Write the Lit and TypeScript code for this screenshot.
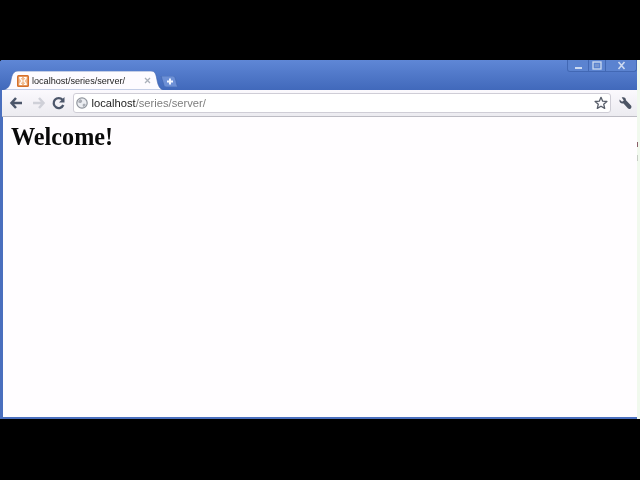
import { LitElement, html, css } from "lit";
import { customElement } from "lit/decorators.js";

@customElement("app-root")
export class AppRoot extends LitElement {
  static styles = css`
    :host { display: block; width: 640px; height: 480px; background: #000; overflow: hidden; font-family: "Liberation Sans", Arial, sans-serif; }
    .stage { height: 480px; padding: 60px 0 61px; box-sizing: border-box; display: flex; filter: blur(0.35px); }
    .window { width: 637px; flex: none; display: flex; flex-direction: column; background: #4a6fbe; border-radius: 3px 3px 0 0; box-shadow: inset 0 1px 0 #6f93dc; }
    .edge { width: 3px; flex: none; background: #f1f9ee; display: flex; flex-direction: column; }
    .mark { width: 1px; flex: none; }
    .m1 { margin-top: 82px; height: 5px; background: #8a5f68; }
    .m2 { margin-top: 8px; height: 6px; background: #c6cdc4; }
    .titlebar { height: 30px; flex: none; display: flex; background: linear-gradient(#5f87d6, #4169bb); padding-left: 3px; border-radius: 3px 3px 0 0; }
    .tab { position: relative; margin-top: 11px; width: 160px; height: 19px; flex: none; display: flex; align-items: center; padding: 0 12px 0 14px; box-sizing: border-box; }
    .tabshape { position: absolute; left: 0; top: 0; width: 160px; height: 19px; }
    .favicon, .tabtitle, .close { position: relative; }
    .favicon { width: 12px; height: 12px; flex: none; }
    .tabtitle { margin-left: 3px; font-size: 9.1px; color: #222; white-space: nowrap; flex: 1; }
    .close { width: 7px; height: 7px; }
    .newtab { margin: 16px 0 0 -3px; width: 18px; height: 11px; flex: none; }
    .controls { margin-left: auto; display: flex; height: 12px; flex: none; border: 1px solid #4268b4; border-top: 0; border-radius: 0 0 3px 3px; background: #5b83d0; box-sizing: border-box; }
    .ctl { display: flex; align-items: center; justify-content: center; border-right: 1px solid #4268b4; }
    .ctl:last-child { border-right: 0; }
    .c1 { width: 21px; box-sizing: border-box; } .c2 { width: 17px; box-sizing: border-box; } .c3 { width: 30px; }
    .main { flex: 1; display: flex; flex-direction: column; padding: 0 0 2px 3px; min-height: 0; }
    .toolbar { height: 26px; flex: none; margin-left: -1px; padding-left: 7px; display: flex; align-items: center; background: linear-gradient(#fbf9fd, #ecebf0); border-bottom: 1px solid #bdbcc4; }
    .nav { width: 16px; height: 14px; flex: none; }
    .n2 { margin-left: 4.5px; }
    .n3 { margin-left: 5.5px; }
    .omnibox { margin-left: 5.5px; width: 538px; height: 20px; flex: none; box-sizing: border-box; background: #fff; border: 1px solid #cfcdd6; border-radius: 3px; display: flex; align-items: center; padding: 0 2px 0 2.5px; }
    .globe { width: 12px; height: 12px; flex: none; }
    .url { margin-left: 3.5px; font-size: 11.2px; color: #222; flex: 1; white-space: nowrap; }
    .url span { color: #7d7d7d; }
    .star { width: 14px; height: 14px; flex: none; }
    .wrench { margin-left: 7.5px; width: 14px; height: 14px; flex: none; }
    .content { flex: 1; background: #fffdff; }
    h1 { margin: 0; padding: 6px 0 0 8px; font: bold 24.2px/1.15 "Liberation Serif", "Times New Roman", serif; color: #0a0a0a; }
  `;

  render() {
    return html`
      <div class="stage">
        <div class="window">
          <div class="titlebar">
            <div class="tab">
              <svg class="tabshape" viewBox="0 0 160 19">
                <path d="M0 19 C5 18 7 15 8 9 C9 3 11 0 15 0 H148 C152 0 153 3 154 9 C155 15 157 18 160 19 Z" fill="#fdfbff" stroke="#3d62ad" stroke-width=".6"/>
              </svg>
              <svg class="favicon" viewBox="0 0 12 12">
                <rect width="12" height="12" rx="1.5" fill="#d6702a"/>
                <rect x="1.5" y="1.5" width="9" height="9" fill="#f2bd92"/>
                <path d="M2.5 2.5 L5 6 L2.5 9.5 M9.5 2.5 L7 6 L9.5 9.5 M2.5 2.5 H5 M7 2.5 H9.5 M2.5 9.5 H5 M7 9.5 H9.5" stroke="#fff" stroke-width="1.2" fill="none"/>
              </svg>
              <span class="tabtitle">localhost/series/server/</span>
              <svg class="close" viewBox="0 0 7 7"><path d="M1 1 L6 6 M6 1 L1 6" stroke="#aab0ba" stroke-width="1.3"/></svg>
            </div>
            <svg class="newtab" viewBox="0 0 18 11">
              <path d="M1 0 H13 C15 0 15 2 16 5 C16.500 8 17 10 18 11 H6 C4 11 4 9 3 6 C2 3 1.500 1 1 0 Z" fill="#6d90d6" stroke="#4165ad" stroke-width=".6"/>
              <path d="M10 2.500 V8.500 M7 5.500 H13" stroke="#f2f6ff" stroke-width="2"/>
            </svg>
            <div class="controls">
              <div class="ctl c1"><svg width="9" height="6" viewBox="0 0 9 6"><rect x="1" y="4" width="7" height="2" fill="#cddaf0"/></svg></div>
              <div class="ctl c2"><svg width="10" height="9" viewBox="0 0 10 9"><rect x="1" y="1" width="8" height="7" fill="none" stroke="#cddaf0" stroke-width="1.300"/><rect x="3" y="3" width="4" height="3" fill="#7795cf"/></svg></div>
              <div class="ctl c3"><svg width="9" height="9" viewBox="0 0 9 9"><path d="M1.500 1 L7.500 8 M7.500 1 L1.500 8" stroke="#cddaf0" stroke-width="1.600"/></svg></div>
            </div>
          </div>
          <div class="main">
            <div class="toolbar">
              <svg class="nav" viewBox="0 0 16 14"><path d="M7 2 L2.500 7 L7 12 M3 7 H13" fill="none" stroke="#4c566a" stroke-width="2.500"/></svg>
              <svg class="nav n2" viewBox="0 0 16 14"><path d="M9 2 L13.500 7 L9 12 M13 7 H3" fill="none" stroke="#cfd0d8" stroke-width="2.500"/></svg>
              <svg class="nav n3" viewBox="0 0 16 14"><path d="M12.300 9 A5 5 0 1 1 11.500 3.800" fill="none" stroke="#4c566a" stroke-width="2.300"/><path d="M13.500 1 V6.500 H8 Z" fill="#4c566a"/></svg>
              <div class="omnibox">
                <svg class="globe" viewBox="0 0 12 12">
                  <circle cx="6" cy="6" r="5.200" fill="#eceef2" stroke="#8f949c" stroke-width="1.200"/>
                  <path d="M4 2 C6 3 7 4 5.500 5.500 C4 6.500 3 6 2 5 M7 7 C9 6.500 10 7 9.500 8.500 L7.500 10 C6.500 9 6.500 8 7 7 Z" fill="#a9adb5"/>
                </svg>
                <span class="url">localhost<span>/series/server/</span></span>
                <svg class="star" viewBox="0 0 14 14"><path d="M7 1.300 L8.700 5.200 L12.900 5.500 L9.700 8.200 L10.700 12.400 L7 10.200 L3.300 12.400 L4.300 8.200 L1.100 5.500 L5.300 5.200 Z" fill="#fbfbfd" stroke="#565c68" stroke-width="1.300" stroke-linejoin="round"/></svg>
              </div>
              <svg class="wrench" viewBox="0 0 14 14"><path d="M1.500 3.500 L4 5.800 L5.800 4.500 L3.700 1.500 C6 .5 8 1.800 8 4.300 L13 9.500 C13.800 10.500 13.500 12 12.500 12.700 C11.500 13.300 10.500 13 9.800 12.200 L5.500 7.500 C3 8 1 6.200 1.500 3.500 Z" fill="#4c5464"/></svg>
            </div>
            <div class="content"><h1>Welcome!</h1></div>
          </div>
        </div>
        <div class="edge"><div class="mark m1"></div><div class="mark m2"></div></div>
      </div>
    `;
  }
}
